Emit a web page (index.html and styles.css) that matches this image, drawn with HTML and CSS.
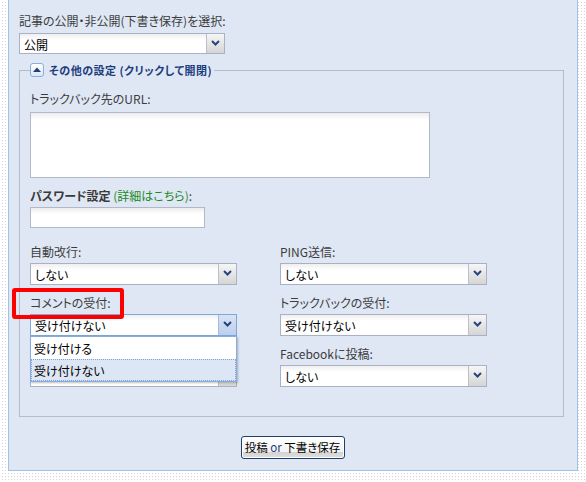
FILE: index.html
```html
<!DOCTYPE html>
<html lang="ja">
<head>
<meta charset="utf-8">
<title>投稿設定</title>
<link rel="stylesheet" href="styles.css">
</head>
<body>
<div class="panel">
  <div class="label">記事の公開・非公開(下書き保存)を選択:</div>
  <div class="select w206 first-select">
    <span class="value">公開</span>
    <span class="arrow"><svg width="9" height="6" viewBox="0 0 9 6"><path d="M1 1 L4.5 4.5 L8 1" fill="none" stroke="#26457f" stroke-width="2"/></svg></span>
  </div>

  <fieldset class="more">
    <legend>
      <span class="toggle"><svg width="8" height="5" viewBox="0 0 8 5"><path d="M0 5 L4 0.5 L8 5 Z" fill="#1f3f7a"/></svg></span>
      <span class="legend-text">その他の設定 (クリックして開閉)</span>
    </legend>

    <div class="label">トラックバック先のURL:</div>
    <div class="textarea"></div>

    <div class="label pw-label"><b>パスワード設定</b> <span class="link">(詳細はこちら)</span>:</div>
    <div class="input"></div>

    <div class="grid">
      <div class="cell">
        <div class="label">自動改行:</div>
        <div class="select">
          <span class="value">しない</span>
          <span class="arrow"><svg width="9" height="6" viewBox="0 0 9 6"><path d="M1 1 L4.5 4.5 L8 1" fill="none" stroke="#26457f" stroke-width="2"/></svg></span>
        </div>
      </div>
      <div class="cell">
        <div class="label">PING送信:</div>
        <div class="select">
          <span class="value">しない</span>
          <span class="arrow"><svg width="9" height="6" viewBox="0 0 9 6"><path d="M1 1 L4.5 4.5 L8 1" fill="none" stroke="#26457f" stroke-width="2"/></svg></span>
        </div>
      </div>
      <div class="cell comment-cell">
        <div class="label">コメントの受付:</div>
        <div class="select focused">
          <span class="value">受け付けない</span>
          <span class="arrow"><svg width="9" height="6" viewBox="0 0 9 6"><path d="M1 1 L4.5 4.5 L8 1" fill="none" stroke="#26457f" stroke-width="2"/></svg></span>
        </div>
        <div class="highlight-box"></div>
        <div class="dropdown">
          <div class="option">受け付ける</div>
          <div class="option current">受け付けない</div>
        </div>
      </div>
      <div class="cell">
        <div class="label">トラックバックの受付:</div>
        <div class="select">
          <span class="value">受け付けない</span>
          <span class="arrow"><svg width="9" height="6" viewBox="0 0 9 6"><path d="M1 1 L4.5 4.5 L8 1" fill="none" stroke="#26457f" stroke-width="2"/></svg></span>
        </div>
      </div>
      <div class="cell">
        <div class="label"></div>
        <div class="select">
          <span class="value"></span>
          <span class="arrow"><svg width="9" height="6" viewBox="0 0 9 6"><path d="M1 1 L4.5 4.5 L8 1" fill="none" stroke="#26457f" stroke-width="2"/></svg></span>
        </div>
      </div>
      <div class="cell">
        <div class="label">Facebookに投稿:</div>
        <div class="select">
          <span class="value">しない</span>
          <span class="arrow"><svg width="9" height="6" viewBox="0 0 9 6"><path d="M1 1 L4.5 4.5 L8 1" fill="none" stroke="#26457f" stroke-width="2"/></svg></span>
        </div>
      </div>
    </div>
  </fieldset>

  <div class="actions">
    <button class="submit" type="button">投稿 <span class="or">or</span> 下書き保存</button>
  </div>
</div>
</body>
</html>
```

FILE: styles.css
```css
* { box-sizing: border-box; }

html, body { margin: 0; padding: 0; }

body {
  width: 586px;
  height: 482px;
  overflow: hidden;
  background-color: #ffffff;
  background-image:
    linear-gradient(90deg, #ffffff 2px, transparent 2px),
    linear-gradient(#ffffff 2px, #d4d4d4 2px);
  background-size: 3px 3px;
  font-family: "Noto Sans CJK JP", "DejaVu Sans", sans-serif;
  font-size: 12px;
  line-height: 16px;
  color: #3c3c3c;
  font-feature-settings: "palt";
}

.panel {
  margin-left: 8px;
  width: 570px;
  height: 471px;
  background: #dfe7f5;
  border: 1px solid #a3c0e6;
  border-top: 0;
  padding: 13px 13px 0 10px;
}

.label {
  height: 16px;
  white-space: nowrap;
}

.select {
  position: relative;
  display: flex;
  width: 207px;
  height: 22px;
  margin-top: 3px;
  background: linear-gradient(#efefef 0, #ffffff 6px);
  border: 1px solid #a9b1c3;
  color: #000;
}

.select.w206 { width: 206px; }
.first-select { margin-top: 4px; height: 21px; }

.select .value {
  flex: 1;
  padding-left: 4px;
  line-height: 21px;
}

.select .arrow {
  width: 18px;
  border-left: 1px solid #b9bfcc;
  background: linear-gradient(#f6f6f6, #d5d5d5);
  display: flex;
  align-items: center;
  justify-content: center;
  padding-bottom: 2px;
}

.select.focused {
  border-color: #7fa7db;
}

.select.focused .arrow {
  border-left-color: #9ebbe2;
  background: linear-gradient(#d7e3f5, #bccfec);
}

.more {
  margin: 9px 0 0;
  padding: 14px 10px 29px;
  border: 1px solid #b4bbca;
  width: 545px;
}

.more legend {
  padding: 0 2px 0 0;
  height: 14px;
  display: flex;
  align-items: center;
}

.toggle {
  width: 14px;
  height: 14px;
  border: 1px solid #8aaedc;
  border-radius: 3px;
  background: linear-gradient(#ffffff, #dbe6f6);
  display: flex;
  align-items: center;
  justify-content: center;
  padding-bottom: 1px;
}

.legend-text {
  margin-left: 5px;
  font-size: 11px;
  font-weight: bold;
  color: #1d3c7b;
  line-height: 14px;
  letter-spacing: 0.5px;
}

.textarea {
  margin-top: 5px;
  width: 400px;
  height: 66px;
  border: 1px solid #b1b8c8;
  background: linear-gradient(#ececec 0, #ffffff 7px);
}

.pw-label { margin-top: 10px; }
.pw-label b { color: #3a3a3a; }
.pw-label .link { color: #1b8a1b; }

.input {
  margin-top: 3px;
  width: 175px;
  height: 21px;
  border: 1px solid #b1b8c8;
  background: linear-gradient(#ececec 0, #ffffff 6px);
}

.grid {
  margin-top: 16px;
  display: grid;
  grid-template-columns: 207px 207px;
  column-gap: 43px;
  row-gap: 10px;
}

.cell { position: relative; }

.highlight-box {
  position: absolute;
  left: -18px;
  top: -7px;
  width: 112px;
  height: 31px;
  border: 4px solid #ff0000;
  border-radius: 3px;
  z-index: 2;
}

.dropdown {
  position: absolute;
  left: 0;
  top: 41px;
  width: 207px;
  height: 46px;
  border: 1px solid #86acdf;
  background: #ffffff;
  box-shadow: 1px 1px 2px rgba(0, 0, 0, 0.25);
  z-index: 3;
  color: #000;
}

.option {
  height: 22px;
  line-height: 23px;
  padding-left: 3px;
}

.option.current {
  background: #dde6f4;
  border: 1px dotted #7ea5d8;
  line-height: 21px;
  padding-left: 2px;
}

.actions {
  display: flex;
  justify-content: center;
  margin-top: 19px;
}

.submit {
  width: 104px;
  height: 23px;
  padding: 0 0 1px;
  margin: 0 0 0 2px;
  border: 1px solid #1f3f6b;
  border-radius: 3px;
  box-shadow: inset 0 0 0 1px #ffffff;
  background: linear-gradient(#ffffff 0, #f3f3f3 70%, #d4d4d4 72%, #dedede 100%);
  font-family: "Noto Sans CJK JP", "DejaVu Sans", sans-serif;
  font-size: 11.5px;
  line-height: 16px;
  color: #000;
  font-feature-settings: "palt";
  letter-spacing: 0;
  white-space: nowrap;
}

.submit .or { color: #1d3c7b; }
```
